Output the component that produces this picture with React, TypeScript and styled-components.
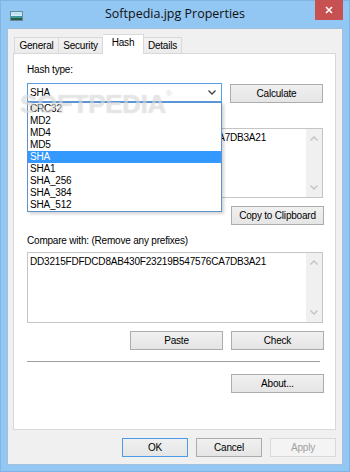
import React from "react";
import styled, { createGlobalStyle } from "styled-components";

const GlobalStyle = createGlobalStyle`
  html, body { margin: 0; padding: 0; }
  body {
    font-family: "Liberation Sans", Arial, sans-serif;
    font-size: 10px;
    letter-spacing: -0.2px;
    color: #000;
  }
  * { box-sizing: border-box; }
`;

const Window = styled.div`
  width: 350px;
  height: 472px;
  display: flex;
  flex-direction: column;
  background: #92c6f3;
  box-shadow: inset 0 0 0 1px #7fb4e6;
`;

const TitleBar = styled.div`
  height: 28px;
  display: grid;
  grid-template-columns: 1fr auto 1fr;
  align-items: start;
`;

const AppIcon = styled.svg`
  margin: 11px 0 0 10px;
`;

const Title = styled.div`
  font-family: "Open Sans", "Liberation Sans", sans-serif;
  font-size: 12.5px;
  letter-spacing: 0;
  line-height: 28px;
  color: #111;
`;

const CloseButton = styled.div`
  justify-self: end;
  width: 28px;
  height: 20px;
  margin-right: 7px;
  background: #c75050;
  display: flex;
  align-items: center;
  justify-content: center;
`;

const Client = styled.div`
  flex: 1;
  margin: 0 7px 7px;
  background: #f0f0f0;
  border: 1px solid #a3bfda;
  padding: 5px 6px 0 5px;
  display: flex;
  flex-direction: column;
`;

const TabStrip = styled.div`
  display: flex;
  align-items: flex-end;
  height: 20px;
  margin-bottom: -1px;
  padding-left: 1px;
  position: relative;
  z-index: 1;
`;

const Tab = styled.div<{ $w: number; $active?: boolean }>`
  width: ${(p) => p.$w}px;
  height: ${(p) => (p.$active ? 20 : 17)}px;
  border: 1px solid #d9d9d9;
  border-bottom: ${(p) => (p.$active ? "none" : "1px solid #d9d9d9")};
  background: ${(p) => (p.$active ? "#fff" : "linear-gradient(#f3f3f3, #ebebeb)")};
  line-height: ${(p) => (p.$active ? 16 : 15)}px;
  text-align: center;
  white-space: nowrap;
  & + & {
    border-left: none;
  }
`;

const Panel = styled.div`
  height: 377px;
  background: #fff;
  border: 1px solid #d9d9d9;
  padding: 10px 11px 0 13px;
  display: flex;
  flex-direction: column;
  position: relative;
`;

const Label = styled.div<{ $top?: number }>`
  line-height: 12px;
  margin-top: ${(p) => p.$top ?? 0}px;
  white-space: nowrap;
`;

const Row = styled.div<{ $top: number; $justify?: string }>`
  display: flex;
  gap: 8px;
  margin-top: ${(p) => p.$top}px;
  justify-content: ${(p) => p.$justify ?? "flex-start"};
  align-items: flex-start;
`;

const ComboWrap = styled.div`
  position: relative;
  z-index: 3;
`;

const Combo = styled.div`
  width: 195px;
  height: 19px;
  border: 1px solid #569de5;
  background: #fff;
  display: flex;
  align-items: center;
  justify-content: space-between;
  padding: 0 5px 0 2px;
`;

const DropList = styled.div`
  position: absolute;
  top: 100%;
  left: 0;
  width: 195px;
  height: 110px;
  background: #fff;
  border: 1px solid #5f93cf;
  box-shadow: 2px 2px 3px rgba(0, 0, 0, 0.18);
`;

const Option = styled.div<{ $selected?: boolean }>`
  height: 12px;
  line-height: 12px;
  padding-left: 2px;
  background: ${(p) => (p.$selected ? "#3399ff" : "transparent")};
  color: ${(p) => (p.$selected ? "#fff" : "#000")};
`;

const Button = styled.div<{ $w: number; $default?: boolean; $disabled?: boolean }>`
  width: ${(p) => p.$w}px;
  height: 19px;
  border: 1px solid
    ${(p) => (p.$default ? "#4d9be6" : p.$disabled ? "#d9d9d9" : "#acacac")};
  background: ${(p) =>
    p.$disabled ? "#f4f4f4" : "linear-gradient(#f0f0f0, #e5e5e5)"};
  color: ${(p) => (p.$disabled ? "#a0a0a0" : "#000")};
  display: flex;
  align-items: center;
  justify-content: center;
  white-space: nowrap;
`;

const TextBox = styled.div<{ $top: number; $h: number }>`
  margin-top: ${(p) => p.$top}px;
  width: 296px;
  height: ${(p) => p.$h}px;
  border: 1px solid #c5c5c5;
  background: #fff;
  display: flex;
`;

const TextContent = styled.div`
  flex: 1;
  padding: 3px 2px;
  line-height: 12px;
  white-space: nowrap;
  overflow: hidden;
`;

const ScrollTrack = styled.div`
  width: 16px;
  background: #f0f0f0;
  display: flex;
  flex-direction: column;
  justify-content: space-between;
  align-items: center;
  padding: 7px 0;
`;

const Separator = styled.div`
  margin-top: 11px;
  width: 293px;
  height: 1px;
  background: #a0a0a0;
`;

const Watermark = styled.div`
  position: absolute;
  left: 6px;
  top: 35px;
  z-index: 4;
  font-weight: bold;
  font-size: 26px;
  letter-spacing: -0.3px;
  color: rgba(255, 255, 255, 0.55);
  text-shadow: 0 0 1px rgba(0, 0, 0, 0.22);
  pointer-events: none;
  sup {
    font-size: 8px;
    vertical-align: top;
    font-weight: normal;
  }
`;

const Footer = styled.div`
  display: flex;
  justify-content: flex-end;
  gap: 8px;
  margin-top: 8px;
`;

const Chevron = ({ up, color = "#c2c2c2" }: { up?: boolean; color?: string }) => (
  <svg width="8" height="5" viewBox="0 0 8 5">
    <path
      d={up ? "M0.5 4.5 L4 1 L7.5 4.5" : "M0.5 0.5 L4 4 L7.5 0.5"}
      fill="none"
      stroke={color}
      strokeWidth="1.3"
    />
  </svg>
);

const HASH = "DD3215FDFDCD8AB430F23219B547576CA7DB3A21";
const TYPES = ["CRC32", "MD2", "MD4", "MD5", "SHA", "SHA1", "SHA_256", "SHA_384", "SHA_512"];

const HashField = ({ top, h }: { top: number; h: number }) => (
  <TextBox $top={top} $h={h}>
    <TextContent>{HASH}</TextContent>
    <ScrollTrack>
      <Chevron up />
      <Chevron />
    </ScrollTrack>
  </TextBox>
);

export default function App() {
  return (
    <>
      <GlobalStyle />
      <Window>
        <TitleBar>
          <AppIcon width="13" height="10" viewBox="0 0 13 10">
            <rect x="0.5" y="0.5" width="12" height="9" fill="#d9eef9" stroke="#6c8a9a" />
            <rect x="1" y="1" width="11" height="3" fill="#bfe3f6" />
            <rect x="1" y="5" width="11" height="2" fill="#3d9a9e" />
            <rect x="1" y="7" width="11" height="2" fill="#2a5a4a" />
          </AppIcon>
          <Title>Softpedia.jpg Properties</Title>
          <CloseButton>
            <svg width="8" height="8" viewBox="0 0 8 8">
              <path d="M1 1 L7 7 M7 1 L1 7" stroke="#fff" strokeWidth="1.6" />
            </svg>
          </CloseButton>
        </TitleBar>
        <Client>
          <TabStrip>
            <Tab $w={45}>General</Tab>
            <Tab $w={44}>Security</Tab>
            <Tab $w={41} $active>
              Hash
            </Tab>
            <Tab $w={38}>Details</Tab>
          </TabStrip>
          <Panel>
            <Watermark>
              SOFTPEDIA<sup>®</sup>
            </Watermark>
            <Label>Hash type:</Label>
            <Row $top={7}>
              <ComboWrap>
                <Combo>
                  <span>SHA</span>
                  <Chevron color="#404040" />
                </Combo>
                <DropList>
                  {TYPES.map((t) => (
                    <Option key={t} $selected={t === "SHA"}>
                      {t}
                    </Option>
                  ))}
                </DropList>
              </ComboWrap>
              <Button $w={93} style={{ marginTop: 1 }}>
                Calculate
              </Button>
            </Row>
            <HashField top={25} h={70} />
            <Row $top={8} $justify="flex-end">
              <Button $w={93}>Copy to Clipboard</Button>
            </Row>
            <Label $top={10}>Compare with: (Remove any prefixes)</Label>
            <HashField top={5} h={71} />
            <Row $top={8} $justify="flex-end">
              <Button $w={93}>Paste</Button>
              <Button $w={93}>Check</Button>
            </Row>
            <Separator />
            <Row $top={12} $justify="flex-end">
              <Button $w={93}>About...</Button>
            </Row>
          </Panel>
          <Footer>
            <Button $w={66} $default>
              OK
            </Button>
            <Button $w={66}>Cancel</Button>
            <Button $w={66} $disabled>
              Apply
            </Button>
          </Footer>
        </Client>
      </Window>
    </>
  );
}
